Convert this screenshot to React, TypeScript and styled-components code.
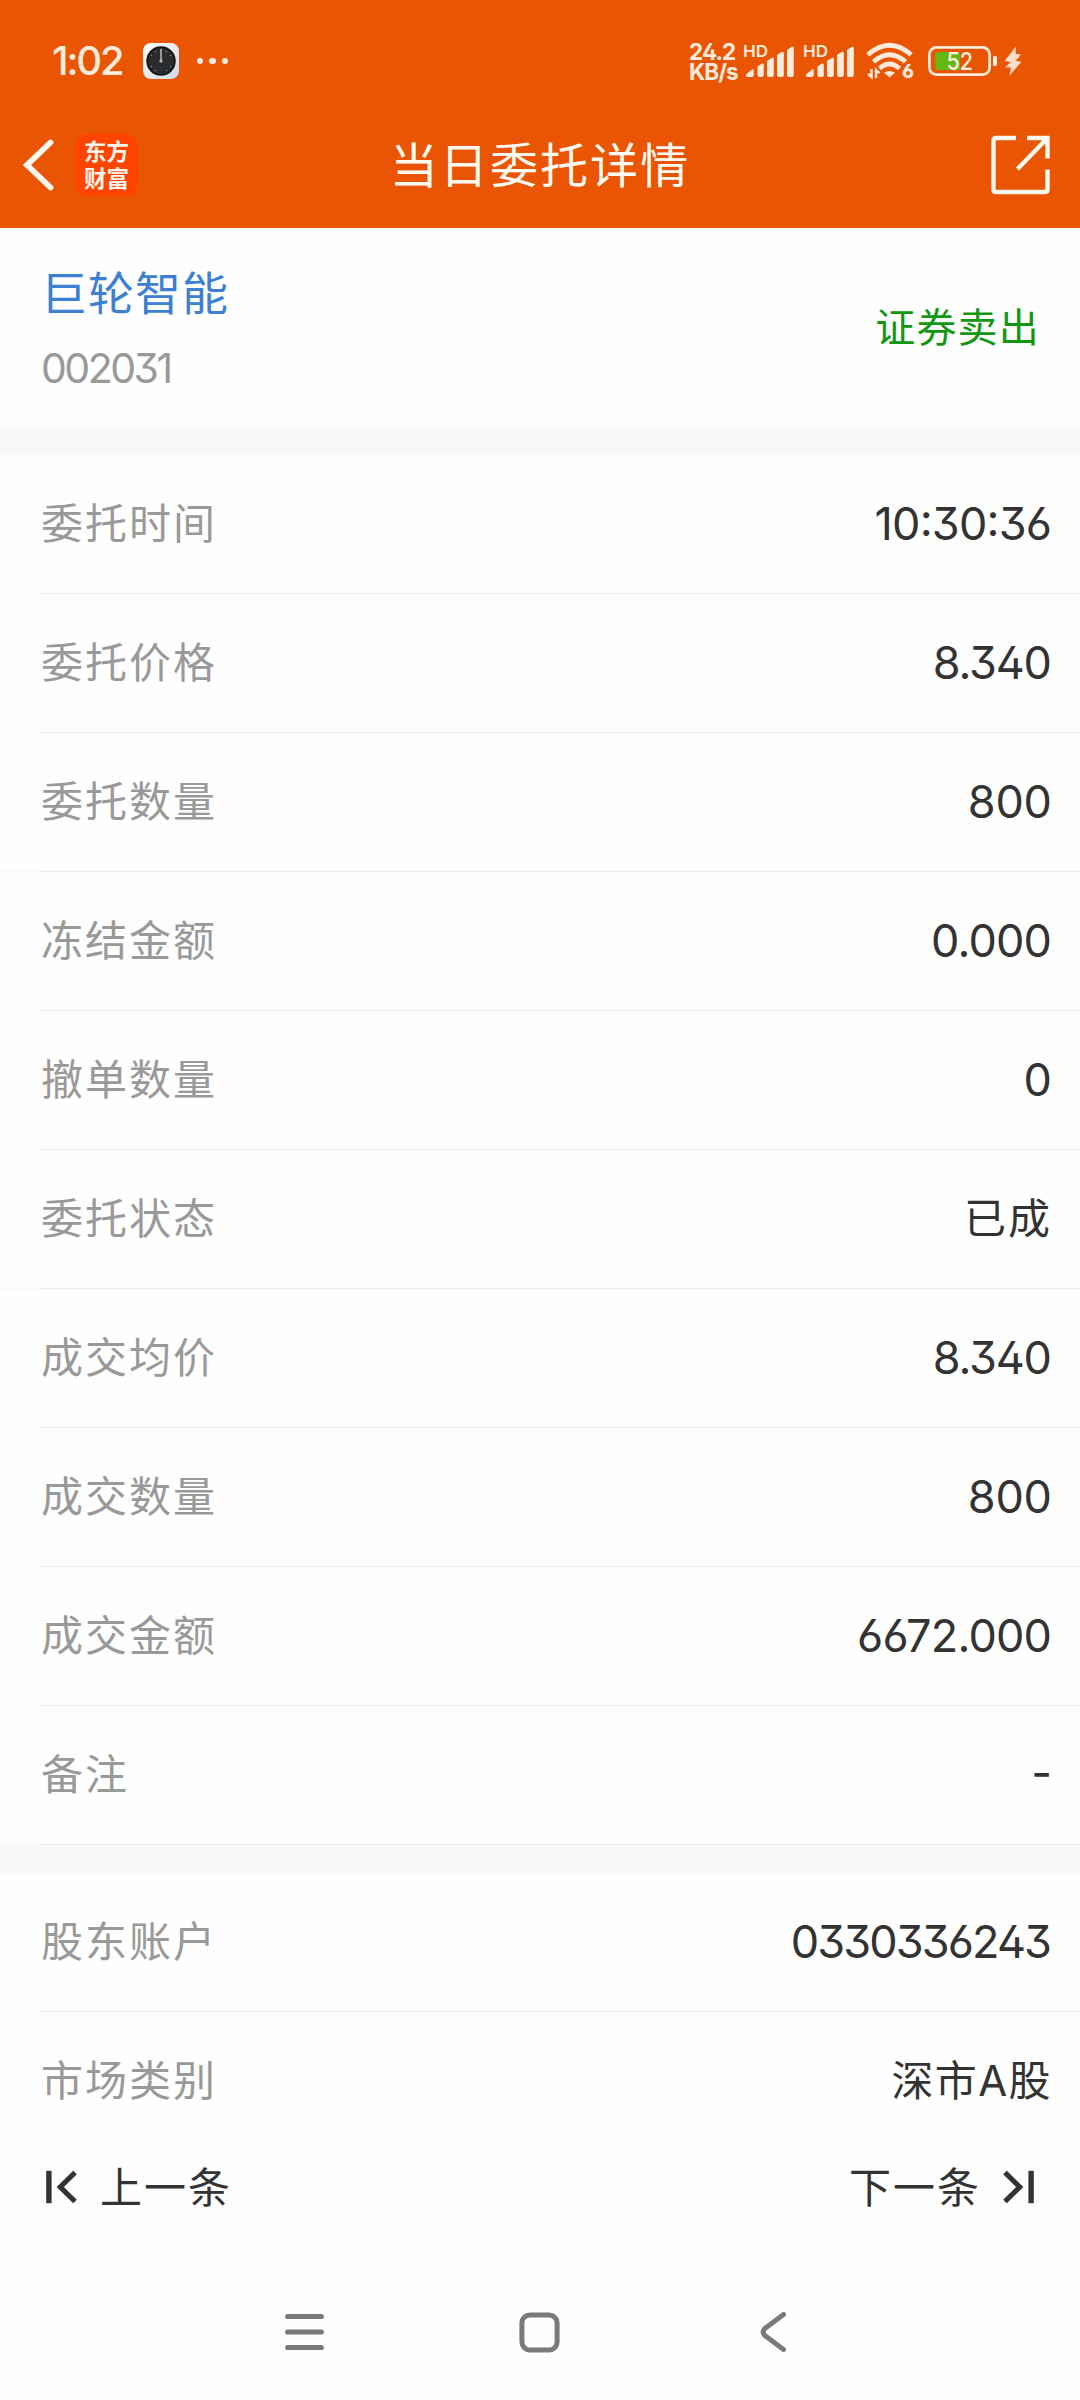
import React from 'react';
import styled, { createGlobalStyle } from 'styled-components';

const GlobalStyle = createGlobalStyle`
  * { box-sizing: border-box; }
  body {
    margin: 0;
    background: #fdfdfd;
    font-family: Inter, "Noto Sans CJK SC", sans-serif;
    font-feature-settings: "ss01", "cv09", "cv03", "cv04";
  }
`;

const Screen = styled.div`
  width: 1080px;
  height: 2400px;
  display: flex;
  flex-direction: column;
  overflow: hidden;
  background: #fefefe;
`;

const Header = styled.header`
  height: 228px;
  flex: none;
  background: #ea5504;
  color: #ffebdc;
`;

const StatusBar = styled.div`
  height: 122px;
  padding: 0 58px 0 52px;
  display: flex;
  align-items: center;
  justify-content: space-between;
`;

const StatusLeft = styled.div`
  display: flex;
  align-items: center;
`;

const Time = styled.span`
  width: 91px;
  font-size: 40px;
  line-height: 50px;
  font-weight: 500;
  letter-spacing: -2.2px;
`;

const Dots = styled.div`
  display: flex;
  gap: 6px;
  margin-left: 18px;
`;

const Dot = styled.i`
  width: 6.4px;
  height: 6.4px;
  border-radius: 50%;
  background: #ffebdc;
`;

const StatusRight = styled.div`
  display: flex;
  align-items: center;
`;

const NetRate = styled.div`
  width: 55px;
  padding-top: 2px;
  display: flex;
  flex-direction: column;
  font-size: 22.5px;
  line-height: 19.7px;
  font-weight: 700;
  letter-spacing: -0.9px;
  white-space: nowrap;
`;

const Glyph = styled.svg<{ $gap?: number }>`
  display: block;
  flex: none;
  overflow: visible;
  margin-right: ${(p) => p.$gap ?? 0}px;
`;

const TitleBar = styled.div`
  height: 86px;
  padding: 0 28px 0 22px;
  display: grid;
  grid-template-columns: 120px 1fr 120px;
  align-items: center;
`;

const TitleLeft = styled.div`
  display: flex;
  align-items: center;
  gap: 22px;
`;

const Title = styled.h1`
  margin: 0;
  padding: 2px 0 0 6px;
  text-align: center;
  font-size: 48px;
  line-height: 60px;
  font-weight: 400;
  letter-spacing: 2.1px;
  color: #fffaf2;
`;

const Logo = styled.div`
  flex: none;
  width: 62px;
  height: 62px;
  padding: 0 0 2px 8px;
  display: flex;
  flex-direction: column;
  justify-content: center;
  border-radius: 12px;
  background: #ff4400;
  color: #fff4ee;
  font-family: "Noto Sans CJK SC", sans-serif;
  font-size: 22.5px;
  line-height: 27px;
  font-weight: 700;
  white-space: nowrap;
`;

const ShareSlot = styled.div`
  justify-self: end;
`;

const Stock = styled.section`
  height: 199px;
  flex: none;
  padding: 0 40px 0 41px;
  display: flex;
  align-items: center;
  justify-content: space-between;
`;

const StockInfo = styled.div`
  padding-top: 6px;
`;

const StockName = styled.div`
  font-size: 46px;
  line-height: 60px;
  letter-spacing: 1px;
  color: #3d7fd0;
`;

const StockCode = styled.div`
  margin-top: 15px;
  font-size: 41px;
  line-height: 60px;
  letter-spacing: -2.5px;
  color: #999;
`;

const Direction = styled.div`
  padding-bottom: 6px;
  font-size: 40px;
  letter-spacing: 1.2px;
  color: #119712;
`;

const Band = styled.div<{ $h: number }>`
  height: ${(p) => p.$h}px;
  flex: none;
  background: #f7f8fa;
`;

const Row = styled.div<{ $last?: boolean }>`
  height: ${(p) => (p.$last ? 138 : 139)}px;
  flex: none;
  padding: 0 28px 0 41px;
  display: flex;
  align-items: center;
  justify-content: space-between;
  border-bottom: ${(p) => (p.$last ? 0 : 1)}px solid;
  border-image: linear-gradient(to right, #f7f8fa 41px, #e9ebec 41px) 1;
`;

const Label = styled.span`
  font-size: 42px;
  line-height: 60px;
  letter-spacing: 2px;
  color: #999;
`;

const Value = styled.span<{ $track: number }>`
  font-size: 45px;
  line-height: 60px;
  font-weight: 370;
  font-feature-settings: "ss01", "cv09", "cv03", "cv04", "case";
  letter-spacing: ${(p) => p.$track}px;
  margin-right: ${(p) => -p.$track}px;
  color: #333;
`;

const TextValue = styled(Value)`
  font-size: 42px;
  font-weight: 400;
  margin-right: 0;
`;

const Pager = styled.nav`
  height: 74px;
  flex: none;
  padding: 0 46px;
  display: flex;
  align-items: center;
  justify-content: space-between;
`;

const PagerButton = styled.button<{ $gap: number }>`
  padding: 0;
  border: 0;
  background: none;
  display: flex;
  align-items: center;
  gap: ${(p) => p.$gap}px;
  font: inherit;
  font-size: 42px;
  line-height: 60px;
  letter-spacing: 2px;
  color: #333;
`;

const PagerText = styled.span`
  padding-top: 2px;
`;

const SystemNav = styled.footer`
  height: 136px;
  flex: none;
  margin-top: auto;
  padding: 0 293px 0 284px;
  display: flex;
  align-items: center;
  justify-content: space-between;
`;

const ClockIcon = () => (
  <Glyph width="36" height="36" viewBox="0 0 36 36">
    <defs>
      <linearGradient id="clockFace" x1="0" y1="0" x2="1" y2="1">
        <stop offset="0" stopColor="#ffffff" />
        <stop offset="1" stopColor="#cfd8e2" />
      </linearGradient>
    </defs>
    <rect width="36" height="36" rx="8" fill="url(#clockFace)" />
    <circle cx="18" cy="18" r="14.7" fill="#111" />
    <circle cx="18" cy="18" r="13.2" fill="#2a2b2c" />
    <path d="M18 6v13" stroke="#aaa" strokeWidth="1.7" />
    <g fill="#888">
      <circle cx="12.5" cy="8.5" r=".7" />
      <circle cx="23.5" cy="8.5" r=".7" />
      <circle cx="8.5" cy="12.5" r=".7" />
      <circle cx="27.5" cy="12.5" r=".7" />
      <circle cx="8.5" cy="23.5" r=".7" />
      <circle cx="27.5" cy="23.5" r=".7" />
      <circle cx="12.5" cy="27.5" r=".7" />
      <circle cx="23.5" cy="27.5" r=".7" />
      <circle cx="18" cy="18" r="1.6" fill="#bbb" />
    </g>
  </Glyph>
);

const SignalIcon = ({ gap }: { gap: number }) => (
  <Glyph $gap={gap} width="50" height="36" viewBox="0 0 50 36" fill="#ffebdc">
    <text x="-1" y="14.4" fontSize="16.5" fontWeight="600" textLength="25" lengthAdjust="spacingAndGlyphs">
      HD
    </text>
    <path d="M2.5 31 8 26.5Q9.7 25.5 9.7 27.5V32Q9.7 34 7.7 34H3.8Q0.8 33.5 2.5 31Z" />
    <path d="M13.5 23.5 18 20.6Q19.8 20 19.8 22V32q0 2-2 2h-2.3q-2 0-2-2Z" />
    <path d="M23 18 27.5 15Q29.8 14 29.8 16V32q0 2-2 2h-2.8q-2 0-2-2Z" />
    <path d="M33 12 37.5 9Q39.8 8 39.8 10V32q0 2-2 2h-2.8q-2 0-2-2Z" />
    <path d="M43 7 47.5 4Q49.8 3 49.8 5V32q0 2-2 2h-2.8q-2 0-2-2Z" />
  </Glyph>
);

const WifiIcon = () => (
  <Glyph $gap={14} width="48" height="36" viewBox="0 0 48 36">
    <g fill="none" stroke="#ffebdc" strokeWidth="4.8">
      <path d="M1.800 11.800Q23.500-7.500 45.200 11.800" />
      <path d="M7.500 18.800Q23.500 4.500 39.500 18.800" />
      <path d="M13.500 25.500Q23.500 16.500 33.500 25.500" />
    </g>
    <path d="M18 29.500Q23.500 26.500 29 29.500L23.500 34.500Z" fill="#ffebdc" />
    <path d="M5.500 26V34L2 30.800M10 35V27L13.500 30.200" fill="none" stroke="#ffebdc" strokeWidth="2.400" />
    <text x="36" y="35.400" fontSize="19" fontWeight="800" fill="#ffebdc" stroke="#ea5504" strokeWidth="2" paintOrder="stroke">
      6
    </text>
  </Glyph>
);

const BatteryIcon = () => (
  <Glyph $gap={7} width="69" height="30" viewBox="0 0 69 30">
    <rect x="1.400" y="1.400" width="60.200" height="27.200" rx="7" fill="none" stroke="#ffebdc" strokeWidth="2.700" />
    <path d="M10 6H32V24H10Q7.300 24 7.300 21.300V8.700Q7.300 6 10 6Z" fill="#64b814" />
    <rect x="65" y="10" width="4" height="10" rx="1.500" fill="#ffebdc" />
    <text x="18.500" y="24" fontSize="24.500" fontWeight="500" textLength="26.500" lengthAdjust="spacingAndGlyphs" fill="#fff0e2">
      52
    </text>
  </Glyph>
);

const BoltIcon = () => (
  <Glyph width="18" height="30" viewBox="0 0 18 30">
    <path d="M12 0.500 0.500 15 6.500 16 1 21.500 7 21.500 5.500 29.500 17.500 15.800 11.500 15 17 8.500 11.500 8Z" fill="#ffdfcb" />
  </Glyph>
);

const BackIcon = () => (
  <Glyph width="32" height="52" viewBox="0 0 32 52">
    <path d="M28.500 3.500 5 26 28.500 48.500" fill="none" stroke="#fff8f0" strokeWidth="5.800" strokeLinecap="round" />
  </Glyph>
);

const ShareIcon = () => (
  <Glyph width="60" height="60" viewBox="0 0 60 60">
    <path
      d="M24 3H4Q1.500 3 1.500 5.500V54.500Q1.500 57 4 57H53Q55.500 57 55.500 54.500V34.500M35 3H55.500V23.500M55 3.500 25.500 34"
      fill="none"
      stroke="#fff8ee"
      strokeWidth="4.400"
    />
  </Glyph>
);

const SkipIcon = ({ flip }: { flip?: boolean }) => (
  <Glyph width="31" height="34" viewBox="0 0 31 34">
    <g transform={flip ? 'translate(31 0) scale(-1 1)' : undefined}>
      <rect x="0.200" y="0.800" width="5.400" height="32.400" fill="#333" />
      <path d="M29 2.500 14.300 17 29 31.500" fill="none" stroke="#333" strokeWidth="5.200" />
    </g>
  </Glyph>
);

const MenuIcon = () => (
  <Glyph width="40" height="40" viewBox="0 0 40 40">
    <path d="M3.700 4.500H37.300M3.700 20H37.300M3.700 35.500H37.300" stroke="#7a7a7a" strokeWidth="5.200" strokeLinecap="round" />
  </Glyph>
);

const HomeIcon = () => (
  <Glyph $gap={6} width="41" height="41" viewBox="0 0 41 41">
    <rect x="2.900" y="2.900" width="35.200" height="35.200" rx="8" fill="none" stroke="#7a7a7a" strokeWidth="5" />
  </Glyph>
);

const SystemBackIcon = () => (
  <Glyph width="27" height="42" viewBox="0 0 27 42">
    <path d="M23.500 3.500 4.500 17.800Q1.800 21 4.500 24.200L23.500 38.500" fill="none" stroke="#7a7a7a" strokeWidth="5" strokeLinecap="round" />
  </Glyph>
);

type Field = { label: string; value: string; track: number; text?: boolean };

const orderFields: Field[] = [
  { label: '委托时间', value: '10:30:36', track: -0.8 },
  { label: '委托价格', value: '8.340', track: -1.2 },
  { label: '委托数量', value: '800', track: -0.2 },
  { label: '冻结金额', value: '0.000', track: -0.8 },
  { label: '撤单数量', value: '0', track: 0 },
  { label: '委托状态', value: '已成', track: 2, text: true },
  { label: '成交均价', value: '8.340', track: -1.2 },
  { label: '成交数量', value: '800', track: -0.2 },
  { label: '成交金额', value: '6672.000', track: -0.8 },
  { label: '备注', value: '-', track: 0 },
];

const accountFields: Field[] = [
  { label: '股东账户', value: '0330336243', track: -1.9 },
  { label: '市场类别', value: '深市A股', track: 1.4, text: true },
];

const FieldRow = ({ field, last }: { field: Field; last?: boolean }) => {
  const V = field.text ? TextValue : Value;
  return (
    <Row $last={last}>
      <Label>{field.label}</Label>
      <V $track={field.track}>{field.value}</V>
    </Row>
  );
};

export default function App() {
  return (
    <>
      <GlobalStyle />
      <Screen>
        <Header>
          <StatusBar>
            <StatusLeft>
              <Time>1:02</Time>
              <ClockIcon />
              <Dots>
                <Dot />
                <Dot />
                <Dot />
              </Dots>
            </StatusLeft>
            <StatusRight>
              <NetRate>
                <span>24.2</span>
                <span>KB/s</span>
              </NetRate>
              <SignalIcon gap={10} />
              <SignalIcon gap={12} />
              <WifiIcon />
              <BatteryIcon />
              <BoltIcon />
            </StatusRight>
          </StatusBar>
          <TitleBar>
            <TitleLeft>
              <BackIcon />
              <Logo>
                <span>东方</span>
                <span>财富</span>
              </Logo>
            </TitleLeft>
            <Title>当日委托详情</Title>
            <ShareSlot>
              <ShareIcon />
            </ShareSlot>
          </TitleBar>
        </Header>
        <Stock>
          <StockInfo>
            <StockName>巨轮智能</StockName>
            <StockCode>002031</StockCode>
          </StockInfo>
          <Direction>证券卖出</Direction>
        </Stock>
        <Band $h={28} />
        {orderFields.map((f) => (
          <FieldRow key={f.label} field={f} />
        ))}
        <Band $h={28} />
        {accountFields.map((f, i) => (
          <FieldRow key={f.label} field={f} last={i === accountFields.length - 1} />
        ))}
        <Pager>
          <PagerButton $gap={23}>
            <SkipIcon />
            <PagerText>上一条</PagerText>
          </PagerButton>
          <PagerButton $gap={22}>
            <PagerText>下一条</PagerText>
            <SkipIcon flip />
          </PagerButton>
        </Pager>
        <SystemNav>
          <MenuIcon />
          <HomeIcon />
          <SystemBackIcon />
        </SystemNav>
      </Screen>
    </>
  );
}
